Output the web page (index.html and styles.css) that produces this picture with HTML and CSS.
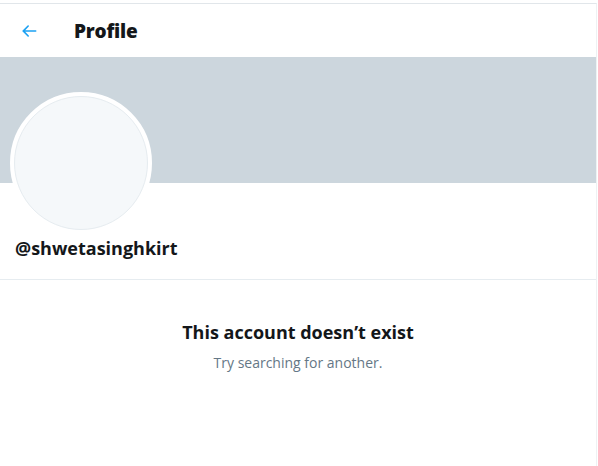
FILE: index.html
```html
<html>

<head>
    <meta charset="utf-8">
    <title>Profile</title>
    <link rel="stylesheet" href="styles.css">
</head>

<body>
    <div class="column">
        <div class="header">
            <span class="back">
                <svg width="20" height="20" viewBox="0 0 24 24">
                    <path d="M20 11H7.414l4.293-4.293a1 1 0 0 0-1.414-1.414l-6 6a1 1 0 0 0 0 1.414l6 6a1 1 0 0 0 1.414-1.414L7.414 13H20a1 1 0 0 0 0-2z" fill="#1da1f2"/>
                </svg>
            </span>
            <div class="title">Profile</div>
        </div>

        <div class="banner"></div>

        <div class="profile">
            <div class="avatar"><div class="avatar-inner"></div></div>
            <div class="handle">@shwetasinghkirt</div>
        </div>

        <div class="empty">
            <div class="empty-title">This account doesn’t exist</div>
            <div class="empty-text">Try searching for another.</div>
        </div>
    </div>
</body>

</html>
```

FILE: styles.css
```css
body {
    margin: 0;
    padding-top: 3px;
    background-color: #fff;
    font-family: 'Open Sans', 'Noto Sans', sans-serif;
    color: #14171a;
}

.column {
    width: 596px;
    height: 463px;
    border-top: 1px solid #e1e6ea;
    border-right: 1px solid #eef1f3;
}

.header {
    display: flex;
    align-items: center;
    height: 53px;
    padding-left: 19px;
}

.back {
    display: flex;
    width: 20px;
    height: 20px;
    margin-right: 35px;
}

.title {
    font-size: 19px;
    font-weight: 800;
    letter-spacing: -0.2px;
}

.banner {
    height: 126px;
    background-color: #ccd6dd;
}

.profile {
    padding: 0 10px 19px;
    border-bottom: 1px solid #e6ecf0;
}

.avatar {
    width: 134px;
    height: 134px;
    margin-top: -91px;
    border: 4px solid #fff;
    border-radius: 50%;
    background-color: #fff;
}

.avatar-inner {
    width: 132px;
    height: 132px;
    border: 1px solid #e6ecf0;
    border-radius: 50%;
    background-color: #f5f8fa;
}

.handle {
    margin-top: 2px;
    padding-left: 5px;
    font-size: 18px;
    font-weight: 700;
    line-height: 24px;
}

.empty {
    display: flex;
    flex-direction: column;
    align-items: center;
    padding-top: 39px;
}

.empty-title {
    font-size: 18px;
    font-weight: 700;
    line-height: 26px;
}

.empty-text {
    margin-top: 8px;
    font-size: 14px;
    color: #657786;
    line-height: 20px;
}
```
